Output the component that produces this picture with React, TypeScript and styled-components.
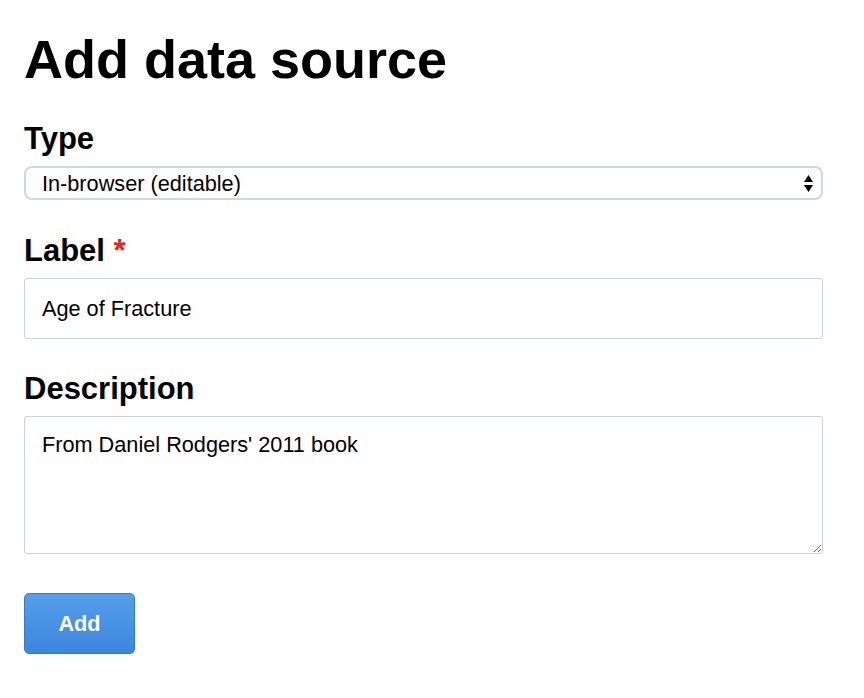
import styled, { createGlobalStyle } from 'styled-components';
import { useState } from 'react';

const GlobalStyle = createGlobalStyle`
    html, body {
        margin: 0;
        padding: 0;
        background: #ffffff;
    }
    body {
        font-family: "Liberation Sans", Arial, Helvetica, sans-serif;
        color: #000000;
    }
`

const typeOptions = ['In-browser (editable)', 'Remote (read-only)', 'Local file'];

function App() {
    const [type, setType] = useState(typeOptions[0]);
    const [label, setLabel] = useState('Age of Fracture');
    const [description, setDescription] = useState("From Daniel Rodgers' 2011 book");

    return (
        <>
            <GlobalStyle />
            <Page>
                <Title>Add data source</Title>
                <Form onSubmit={(e) => e.preventDefault()}>
                    <FieldLabel $gap={37}>Type</FieldLabel>
                    <SelectWrapper>
                        <Select value={type} onChange={(e) => setType(e.target.value)}>
                            {typeOptions.map((opt) => (
                                <option key={opt} value={opt}>{opt}</option>
                            ))}
                        </Select>
                        <SelectArrows width="9" height="17" viewBox="0 0 9 17">
                            <path d="M4.5 0 L9 7 L0 7 Z" fill="#000" />
                            <path d="M0 10 L9 10 L4.5 17 Z" fill="#000" />
                        </SelectArrows>
                    </SelectWrapper>

                    <FieldLabel $gap={35}>
                        Label <Required>*</Required>
                    </FieldLabel>
                    <TextInput value={label} onChange={(e) => setLabel(e.target.value)} />

                    <FieldLabel $gap={34}>Description</FieldLabel>
                    <TextArea value={description} onChange={(e) => setDescription(e.target.value)} />

                    <SubmitButton type="submit">Add</SubmitButton>
                </Form>
            </Page>
        </>
    )
}

const Page = styled.div`
    padding: 32px 41px 0 24px;
`

const Title = styled.h1`
    margin: 0;
    font-size: 54px;
    line-height: 54px;
    font-weight: bold;
`

const Form = styled.form`
    display: flex;
    flex-direction: column;
    align-items: flex-start;
`

const FieldLabel = styled.label<{ $gap: number }>`
    display: block;
    margin: ${(p) => p.$gap}px 0 12px;
    font-size: 31px;
    line-height: 31px;
    font-weight: bold;
`

const Required = styled.span`
    color: #e2261c;
`

const SelectWrapper = styled.div`
    position: relative;
    width: 100%;
`

const Select = styled.select`
    appearance: none;
    -webkit-appearance: none;
    display: block;
    box-sizing: border-box;
    width: 100%;
    height: 34px;
    margin: 0;
    padding: 0 40px 0 16px;
    border: 2px solid #d3d6da;
    border-radius: 8px;
    background: #ffffff;
    font-family: "Liberation Sans", Arial, Helvetica, sans-serif;
    font-size: 21.7px;
    color: #000000;
    outline: none;
`

const SelectArrows = styled.svg`
    position: absolute;
    right: 10px;
    top: 9px;
    pointer-events: none;
`

const TextInput = styled.input`
    display: block;
    box-sizing: border-box;
    width: 100%;
    height: 61px;
    margin: 0;
    padding: 0 17px;
    border: 1px solid #cdd0d4;
    border-radius: 3px;
    font-family: "Liberation Sans", Arial, Helvetica, sans-serif;
    font-size: 21.7px;
    color: #000000;
    outline: none;
`

const TextArea = styled.textarea`
    display: block;
    box-sizing: border-box;
    width: 100%;
    height: 138px;
    margin: 0;
    padding: 15px 17px;
    border: 1px solid #cdd0d4;
    border-radius: 3px;
    font-family: "Liberation Sans", Arial, Helvetica, sans-serif;
    font-size: 21.7px;
    line-height: 26px;
    color: #000000;
    outline: none;
    resize: both;
`

const SubmitButton = styled.button`
    margin-top: 39px;
    width: 111px;
    height: 61px;
    border: 1px solid #3877c9;
    border-radius: 5px;
    background: linear-gradient(to bottom, #549fea, #3d85dd);
    color: #ffffff;
    font-family: "Liberation Sans", Arial, Helvetica, sans-serif;
    font-size: 21.7px;
    font-weight: bold;
    cursor: pointer;
`

export default App;
